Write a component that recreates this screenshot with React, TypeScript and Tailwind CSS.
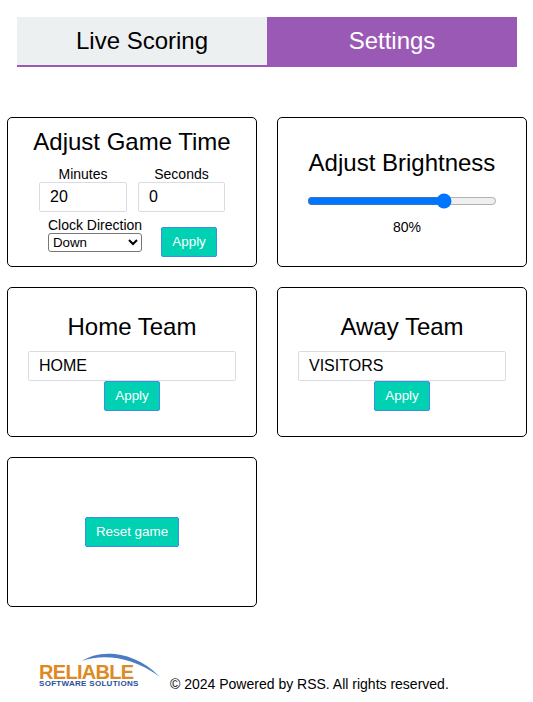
const applyBtn = "h-[30px] rounded-[2px] border border-[#3b8fe8] bg-[#00d1b2] pt-[1px] text-[13.4px] font-medium text-white";
const fieldBox = "h-[30px] rounded-[2px] border border-[#dbdbe6] bg-white pl-[10px] text-[16px] text-black outline-none";

function Card({ children, className = "" }: { children: React.ReactNode; className?: string }) {
  return (
    <div className={"flex h-[150px] flex-col items-center rounded-[5px] border border-black " + className}>
      {children}
    </div>
  );
}

function TeamCard({ title, value }: { title: string; value: string }) {
  return (
    <Card className="pt-[25px]">
      <h2 className="text-[24px] leading-[28px]">{title}</h2>
      <input className={fieldBox + " mt-[10px] w-[208px]"} defaultValue={value} />
      <button className={applyBtn + " w-[56px]"}>Apply</button>
    </Card>
  );
}

function Logo() {
  return (
    <div className="relative h-[42px] w-[121px] shrink-0">
      <svg className="absolute left-[42px] top-0" width="80" height="30" viewBox="0 0 80 30">
        <path d="M1 11 C15 1 50 -3 79 27 C50 6 22 4 1 11 Z" fill="#4a7cc4" />
      </svg>
      <div className="absolute left-0 top-[14px] text-[20px] font-bold leading-[16px] tracking-[-0.7px] text-[#dd8a22]">
        RELIABLE
      </div>
      <div className="absolute left-0 top-[31px] whitespace-nowrap text-[8px] font-bold leading-[6px] tracking-[0.3px] text-[#27509b]">
        SOFTWARE SOLUTIONS
      </div>
    </div>
  );
}

export default function App() {
  return (
    <div className="h-[702px] w-[533px] bg-white pt-[17px] font-['Liberation_Sans',Arial,sans-serif] text-black">
      <div className="mx-[16px] flex w-[500px] translate-x-[1px] border-b-2 border-[#9b59b6] text-[24px]">
        <div className="flex h-[48px] w-1/2 items-center justify-center bg-[#ecf0f1]">Live Scoring</div>
        <div className="flex h-[48px] w-1/2 items-center justify-center bg-[#9b59b6] text-white">Settings</div>
      </div>

      <div className="mt-[50px] grid w-[520px] translate-x-[7px] grid-cols-[250px_250px] gap-5">
        <Card className="pt-[10px]">
          <h2 className="text-[24px] leading-[28px]">Adjust Game Time</h2>
          <div className="mt-[10px] flex gap-[11px]">
            <label className="flex w-[88px] flex-col items-center text-[14px] leading-[16px]">
              Minutes
              <input className={fieldBox + " w-[88px]"} defaultValue="20" />
            </label>
            <label className="flex w-[87px] flex-col items-center text-[14px] leading-[16px]">
              Seconds
              <input className={fieldBox + " w-[87px]"} defaultValue="0" />
            </label>
          </div>
          <div className="mt-[5px] flex items-start gap-[19px] pl-[1px]">
            <label className="flex flex-col text-[14px] leading-[16px]">
              Clock Direction
              <select className="h-[19px] w-[94px] rounded-[3px] border border-[#767676] bg-white text-[13.33px]" defaultValue="Down">
                <option>Down</option>
                <option>Up</option>
              </select>
            </label>
            <button className={applyBtn + " mt-[10px] w-[56px]"}>Apply</button>
          </div>
        </Card>

        <Card className="pt-[31px]">
          <h2 className="text-[24px] leading-[28px]">Adjust Brightness</h2>
          <input type="range" defaultValue={74} className="mt-[16px] w-[190px] accent-[#0075ff]" />
          <div className="mt-[10px] pl-[10px] text-[14px] leading-[16px]">80%</div>
        </Card>

        <TeamCard title="Home Team" value="HOME" />
        <TeamCard title="Away Team" value="VISITORS" />

        <Card className="justify-center">
          <button className={applyBtn + " w-[94px]"}>Reset game</button>
        </Card>
      </div>

      <div className="mt-[43px] flex items-end pl-[39px]">
        <Logo />
        <div className="ml-[10px] text-[14px] leading-[16px]">© 2024 Powered by RSS. All rights reserved.</div>
      </div>
    </div>
  );
}
